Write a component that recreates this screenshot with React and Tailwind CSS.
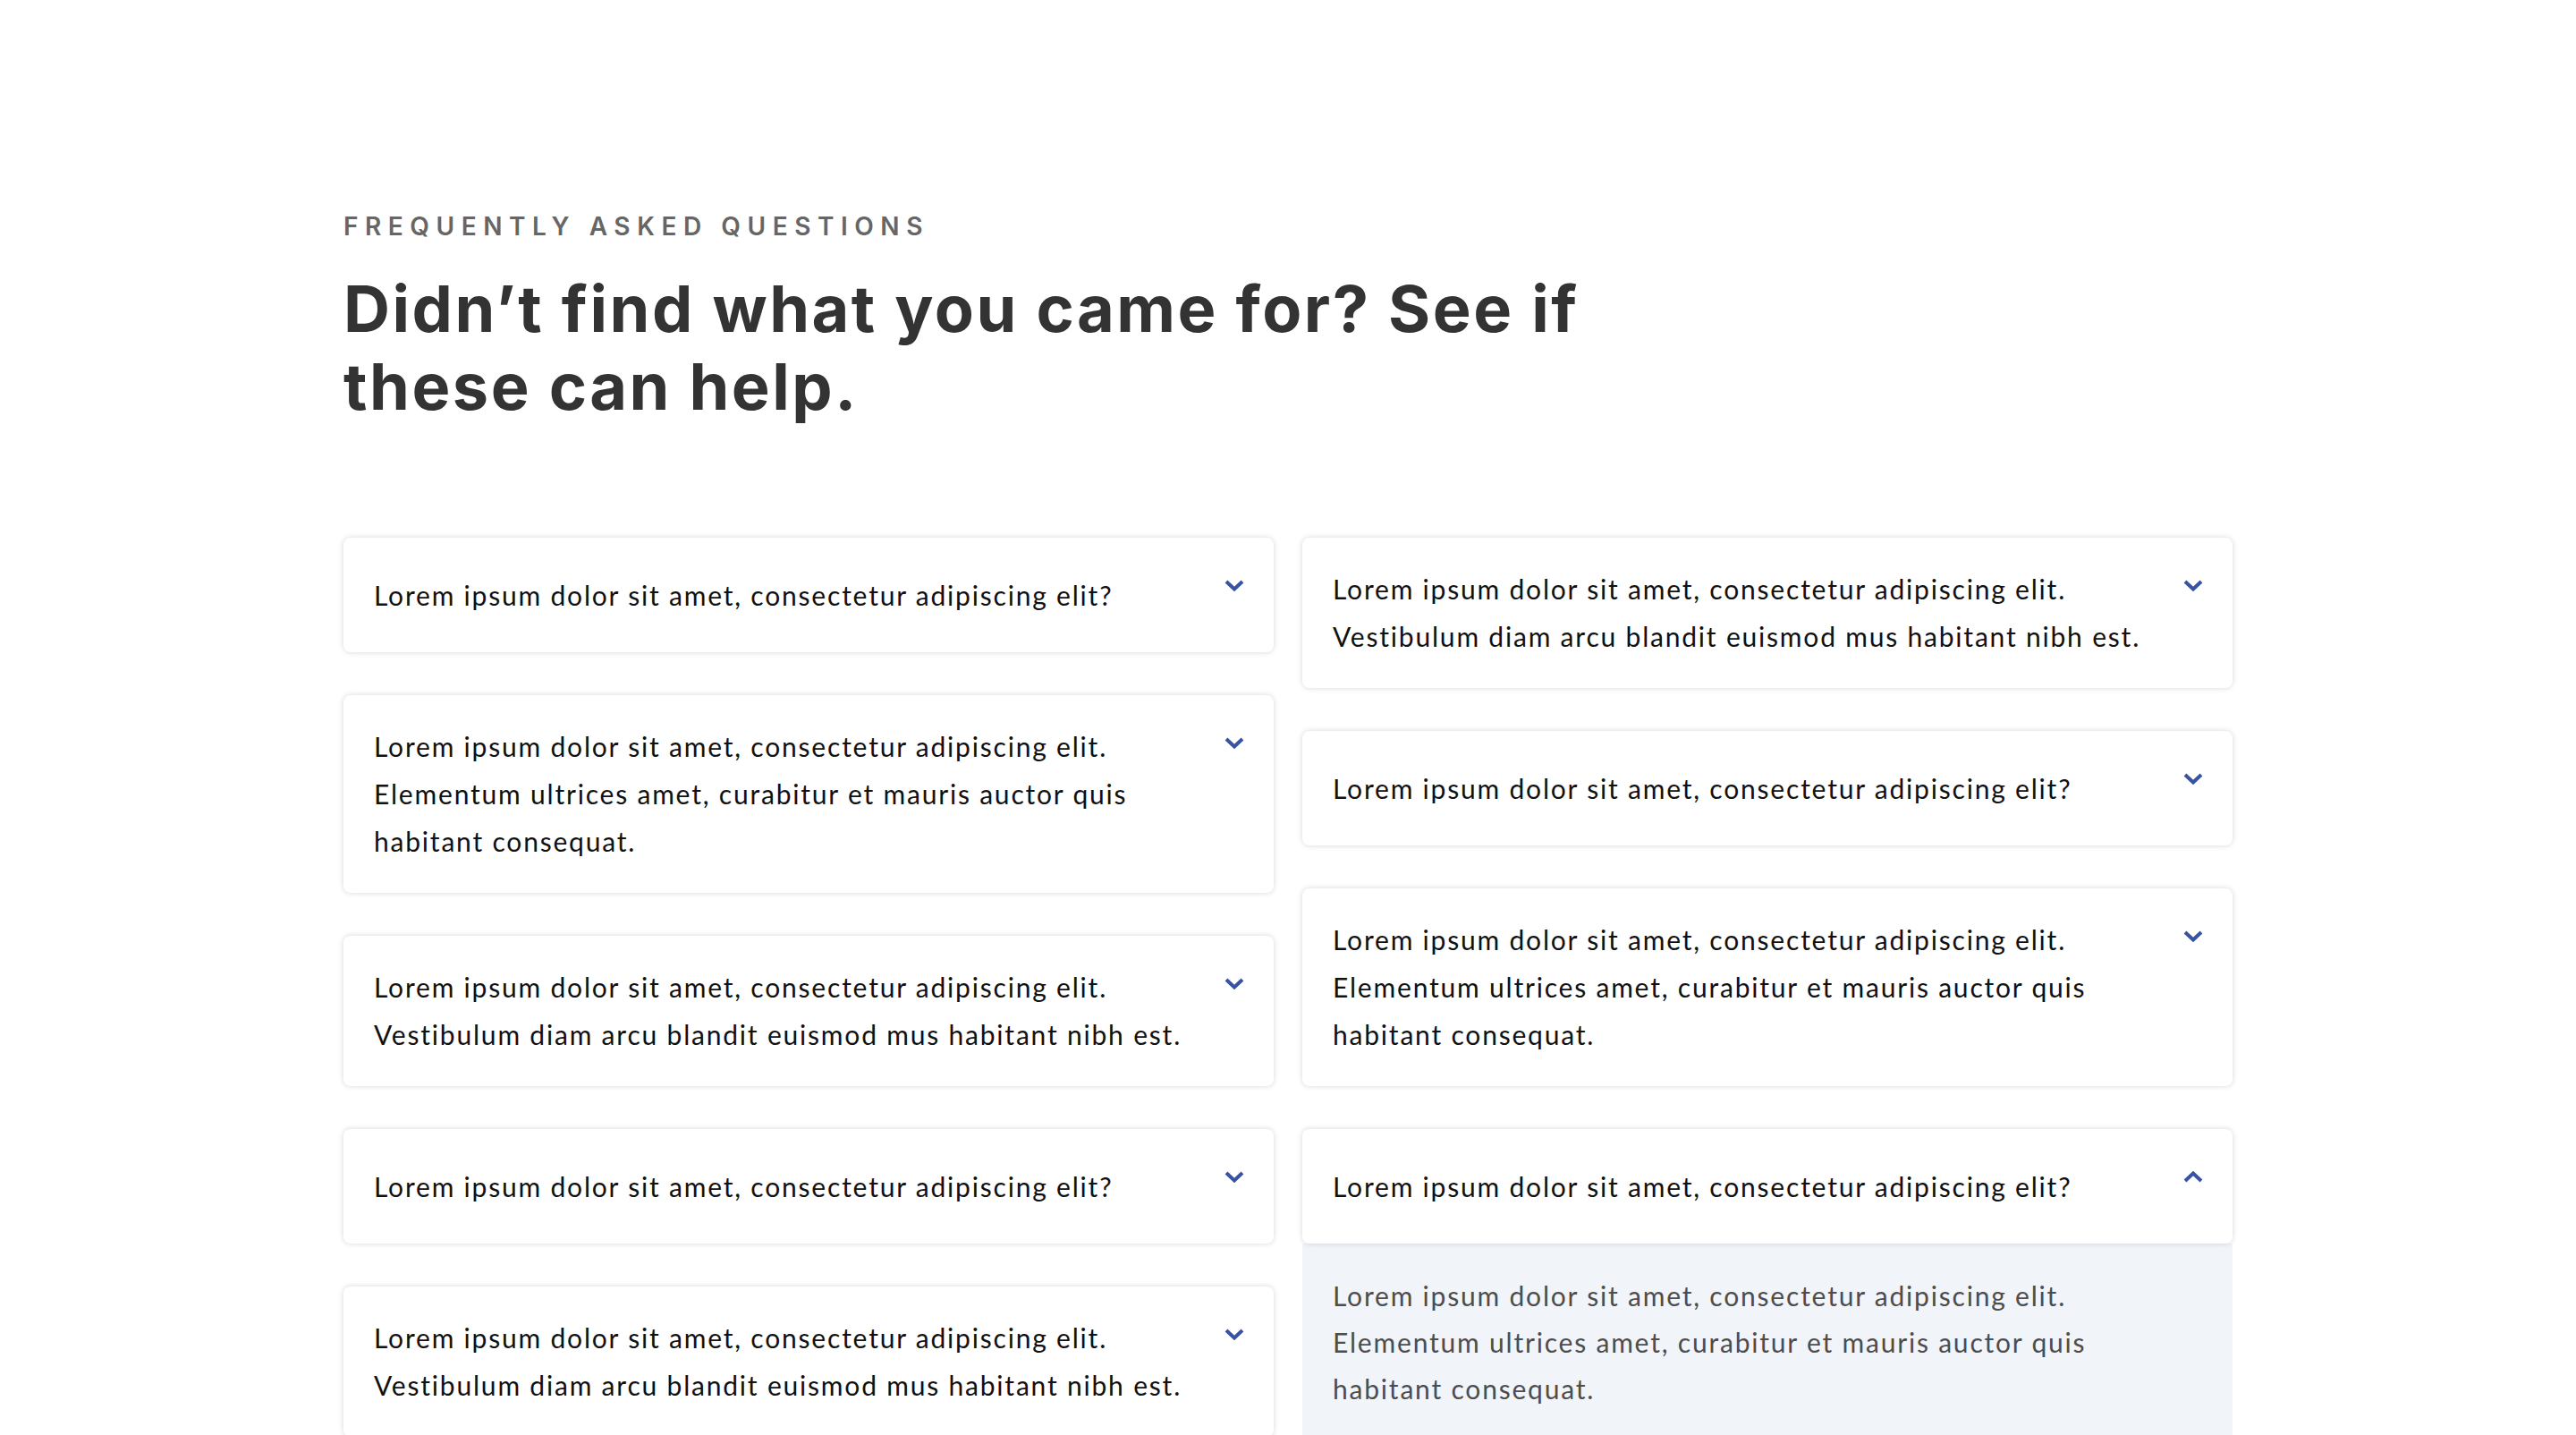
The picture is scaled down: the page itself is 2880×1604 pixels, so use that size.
import { useState } from 'react';

const left = [
  { q: ['Lorem ipsum dolor sit amet, consectetur adipiscing elit?'] },
  {
    q: [
      'Lorem ipsum dolor sit amet, consectetur adipiscing elit.',
      'Elementum ultrices amet, curabitur et mauris auctor quis',
      'habitant consequat.',
    ],
  },
  {
    q: [
      'Lorem ipsum dolor sit amet, consectetur adipiscing elit.',
      'Vestibulum diam arcu blandit euismod mus habitant nibh est.',
    ],
  },
  { q: ['Lorem ipsum dolor sit amet, consectetur adipiscing elit?'] },
  {
    q: [
      'Lorem ipsum dolor sit amet, consectetur adipiscing elit.',
      'Vestibulum diam arcu blandit euismod mus habitant nibh est.',
    ],
  },
];

const right = [
  {
    q: [
      'Lorem ipsum dolor sit amet, consectetur adipiscing elit.',
      'Vestibulum diam arcu blandit euismod mus habitant nibh est.',
    ],
  },
  { q: ['Lorem ipsum dolor sit amet, consectetur adipiscing elit?'] },
  {
    q: [
      'Lorem ipsum dolor sit amet, consectetur adipiscing elit.',
      'Elementum ultrices amet, curabitur et mauris auctor quis',
      'habitant consequat.',
    ],
  },
  {
    q: ['Lorem ipsum dolor sit amet, consectetur adipiscing elit?'],
    open: true,
  },
];

const answer = [
  'Lorem ipsum dolor sit amet, consectetur adipiscing elit.',
  'Elementum ultrices amet, curabitur et mauris auctor quis',
  'habitant consequat.',
];

const Chevron = ({ up }) => (
  <svg
    width="22"
    height="13"
    viewBox="0 0 22 13"
    fill="none"
    className={`shrink-0 mt-[16px] ${up ? 'rotate-180' : ''}`}
  >
    <polyline points="2,2 11,10.5 20,2" stroke="#3953a4" strokeWidth="4" />
  </svg>
);

const Item = ({ item }) => {
  const [open, setOpen] = useState(!!item.open);

  return (
    <div>
      <button
        className="relative z-10 w-full flex items-start justify-between gap-6 min-h-[128px] pl-[34px] pr-[33px] py-[31px] bg-white rounded-lg shadow-[0_0_6px_rgba(0,0,0,0.16)] text-left"
        onClick={() => setOpen(!open)}
      >
        <span className="self-center text-[30px] leading-[53px] tracking-[0.06em] text-[#111]">
          {item.q.map((line, i) => (
            <span key={i} className="block">
              {line}
            </span>
          ))}
        </span>
        <Chevron up={open} />
      </button>
      {open && (
        <div className="bg-[#f1f4f9] pl-[34px] pr-8 py-8 text-[30px] leading-[52px] tracking-[0.06em] text-[#4d4d4d]">
          {answer.map((line, i) => (
            <p key={i}>{line}</p>
          ))}
        </div>
      )}
    </div>
  );
};

const App = () => {
  return (
    <div className="bg-white min-h-screen w-full" style={{ fontFamily: 'Lato, "Noto Sans", sans-serif' }}>
      <main className="w-[2112px] mx-auto pt-[233px] pb-20">
        <p
          className="text-[28px] leading-[40px] font-semibold tracking-[0.27em] text-[#666]"
          style={{ fontFamily: 'Inter, sans-serif' }}
        >
          FREQUENTLY ASKED QUESTIONS
        </p>
        <h1
          className="mt-[28px] text-[72px] leading-[87px] font-bold tracking-[0.035em] text-[#333]"
          style={{ fontFamily: 'Inter, sans-serif' }}
        >
          Didn’t find what you came for? See if
          <br />
          these can help.
        </h1>

        <div className="mt-[126px] grid grid-cols-2 gap-8 items-start">
          <div className="flex flex-col gap-12">
            {left.map((item, i) => (
              <Item key={i} item={item} />
            ))}
          </div>
          <div className="flex flex-col gap-12">
            {right.map((item, i) => (
              <Item key={i} item={item} />
            ))}
          </div>
        </div>
      </main>
    </div>
  );
};

export default App;
